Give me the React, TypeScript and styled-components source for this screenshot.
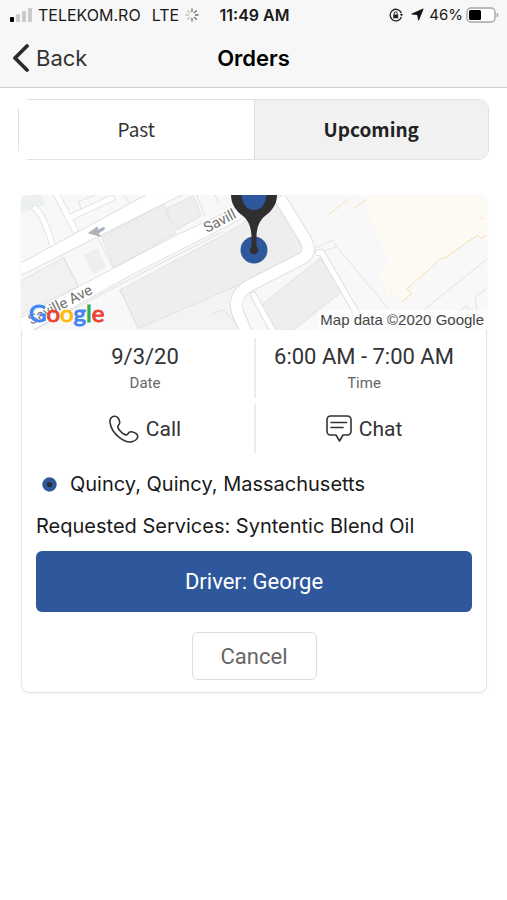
import React, { useState } from "react";
import styled, { createGlobalStyle } from "styled-components";

const system = `Inter, "Liberation Sans", sans-serif`;
const roboto = `Roboto, "Liberation Sans", sans-serif`;

const GlobalStyle = createGlobalStyle`
  *, *::before, *::after { box-sizing: border-box; }
  body { margin: 0; background: #fff; color: #1a1a1a; font-family: ${system}; }
  button { margin: 0; padding: 0; border: 0; background: none; color: inherit; font: inherit; cursor: pointer; }
  p, h1, dl, dd, dt { margin: 0; }
  svg { display: block; flex: none; }
`;

const Page = styled.div`
  display: flex;
  flex-direction: column;
  min-height: 100vh;
`;

const Header = styled.header`
  background: #f7f7f7;
  border-bottom: 1px solid #cfcfcf;
`;

const ThreeColumns = styled.div`
  display: grid;
  grid-template-columns: 1fr auto 1fr;
  align-items: center;
`;

const StatusBar = styled(ThreeColumns)`
  height: 29px;
  padding: 0 8px 0 10px;
  font-size: 16px;
  white-space: nowrap;
`;

const StatusGroup = styled.div<{ $end?: boolean }>`
  display: flex;
  align-items: center;
  justify-content: ${(p) => (p.$end ? "flex-end" : "flex-start")};
  gap: ${(p) => (p.$end ? 3 : 6)}px;
`;

const Clock = styled.time`
  font-size: 16px;
  font-weight: 600;
`;

const Network = styled.span`
  margin-left: 5px;
`;

const Percent = styled.span`
  font-size: 15px;
`;

const LocationSlot = styled.span`
  padding: 0 2px 0 5px;
`;

const NavBar = styled(ThreeColumns)`
  height: 58px;
  padding: 0 12px 1px;
`;

const BackButton = styled.button`
  display: flex;
  align-items: center;
  gap: 6px;
  justify-self: start;
  font-size: 22px;
  color: #333;
`;

const Title = styled.h1`
  font-size: 22px;
  font-weight: 600;
  color: #000;
`;

const Main = styled.main`
  padding: 11px 18px 24px;
`;

const Tabs = styled.div`
  position: relative;
  display: grid;
  grid-template-columns: 1fr 1fr;
  height: 61px;
  border: 1px solid #e2e2e2;
  border-radius: 0 10px 10px 0;

  &::before, &::after {
    content: "";
    position: absolute;
    left: -1px;
    width: 9px;
    height: 9px;
    background: #fff;
  }
  &::before { top: -1px; }
  &::after { bottom: -1px; }
`;

const Tab = styled.button<{ $active: boolean }>`
  padding-bottom: 2px;
  font-family: "Noto Sans CJK SC", "Noto Sans", sans-serif;
  font-size: 19px;
  line-height: 28px;
  font-weight: ${(p) => (p.$active ? 700 : 400)};
  color: ${(p) => (p.$active ? "#222" : "#333")};
  background: ${(p) => (p.$active ? "#f1f1f1" : "#fff")};
  & + & { border-left: 1px solid #dedede; border-radius: 0 9px 9px 0; }
`;

const Card = styled.article`
  margin: 35px 2px 0 3px;
  border-radius: 8px;
  box-shadow: 0 1px 3px rgba(0, 0, 0, 0.05);
`;

const MapFrame = styled.div`
  position: relative;
  height: 135px;
  border-radius: 6px 6px 0 0;
  overflow: hidden;
`;

const PinLayer = styled.div`
  position: absolute;
  inset: 0;
  display: flex;
  justify-content: center;
`;

const MapLogo = styled.span`
  position: absolute;
  left: 8px;
  bottom: 2px;
  font: 400 24px/30px Lato, sans-serif;
  -webkit-text-stroke: 1px currentColor;
  text-shadow: 0 0 2px #fff, 0 0 2px #fff;
`;

const LogoLetter = styled.span<{ $color: string }>`
  color: ${(p) => p.$color};
`;

const MapCredit = styled.span`
  position: absolute;
  right: 0;
  bottom: 0;
  padding: 0 3px 0 2px;
  background: rgba(255, 255, 255, 0.5);
  font: 15px/20px "Liberation Sans", sans-serif;
  color: #444;
`;

const CardBody = styled.div`
  padding: 8px 14px 12px;
  border: 1px solid #e4e4e4;
  border-top: 0;
  border-radius: 0 0 8px 8px;
`;

const SplitRow = styled.dl<{ $height: number }>`
  display: grid;
  grid-template-columns: 1fr 1fr;
  height: ${(p) => p.$height}px;
  margin-bottom: 6px;
  font-family: ${roboto};
  color: #333;
  > * + * { border-left: 2px solid #ececec; }
`;

const Fact = styled.div`
  display: flex;
  flex-direction: column-reverse;
  justify-content: flex-end;
  align-items: center;
  gap: 2px;
  padding-top: 5px;
`;

const FactValue = styled.dd`
  font-size: 22px;
  line-height: 28px;
  white-space: nowrap;
`;

const FactLabel = styled.dt`
  font-size: 15px;
  line-height: 20px;
  color: #666;
`;

const ContactButton = styled.button`
  display: flex;
  align-items: center;
  justify-content: center;
  gap: 7px;
  font-size: 21px;
`;

const Services = styled.div`
  padding: 4px 0;
`;

const Line = styled.p`
  display: flex;
  align-items: center;
  gap: 13px;
  min-height: 42px;
  font-size: 20px;
  line-height: 24px;
`;

const AddressLine = styled(Line)`
  padding-left: 6px;
`;

const DriverButton = styled.button`
  display: block;
  width: 100%;
  height: 61px;
  border-radius: 6px;
  background: #2e579c;
  color: #fff;
  font-family: ${roboto};
  font-size: 22px;
`;

const CancelButton = styled.button`
  display: block;
  width: 125px;
  height: 48px;
  margin: 20px auto 0;
  border: 1px solid #dedede;
  border-radius: 6px;
  color: #666;
  font-family: ${roboto};
  font-size: 22px;
`;

const SignalIcon = () => (
  <svg width="22" height="16" viewBox="0 0 22 16" aria-hidden="true">
    <rect x="0" y="10" width="4" height="5" rx="1" fill="#000" />
    <rect x="6" y="7" width="4" height="8" rx="1" fill="#cbcbcb" />
    <rect x="12" y="4" width="4" height="11" rx="1" fill="#cbcbcb" />
    <rect x="18" y="1" width="4" height="14" rx="1" fill="#cbcbcb" />
  </svg>
);

const SpinnerIcon = () => (
  <svg width="14" height="14" viewBox="-7 -7 14 14" stroke="#555" strokeWidth="1.3" strokeLinecap="round" aria-hidden="true">
    {[0, 45, 90, 135, 180, 225, 270, 315].map((angle) => (
      <path key={angle} d="M0 -3.4V-6.1" transform={`rotate(${angle})`} opacity={angle > 180 ? 0.35 : 0.85} />
    ))}
  </svg>
);

const RotationLockIcon = () => (
  <svg width="14" height="14" viewBox="0 0 14 14" fill="none" stroke="#222" strokeWidth="1.3" aria-hidden="true">
    <path d="M12.4 5.2A5.8 5.8 0 1 0 12.4 9" />
    <path d="M10.9 6h3.1l-1.5 2.4z" fill="#222" stroke="none" />
    <rect x="4.2" y="6.4" width="5" height="3.8" rx=".5" fill="#222" stroke="none" />
    <path d="M5.2 6.6V5.3a1.5 1.5 0 0 1 3 0v1.3" strokeWidth="1" />
  </svg>
);

const LocationIcon = () => (
  <svg width="13" height="13" viewBox="0 0 13 13" aria-hidden="true">
    <path d="M12.2.9 7.6 12.3 6.6 6.7.8 6z" fill="#111" stroke="#111" strokeWidth=".8" strokeLinejoin="round" />
  </svg>
);

const BatteryIcon = () => (
  <svg width="33" height="16" viewBox="0 0 33 16" aria-hidden="true">
    <rect x="1" y="1" width="28" height="14" rx="4" fill="#fff" stroke="#a5a5a5" strokeWidth="1.4" />
    <rect x="3" y="3" width="12" height="10" rx="1.5" fill="#000" />
    <path d="M30.7 5.4q1.7.6 1.7 2.6t-1.7 2.6z" fill="#a5a5a5" />
  </svg>
);

const ChevronIcon = () => (
  <svg width="18" height="28" viewBox="0 0 18 28" fill="none" stroke="#2b2b2b" strokeWidth="3.8" strokeLinecap="round" strokeLinejoin="round" aria-hidden="true">
    <path d="M15 2 3 14 15 26" />
  </svg>
);

const PhoneIcon = () => (
  <svg width="30" height="28" viewBox="0 0 30 28" fill="none" stroke="#333" strokeWidth="1.6" strokeLinecap="round" strokeLinejoin="round" aria-hidden="true">
    <path d="M5 1.3C2 1.8.8 4.6 1 7.4c.7 5.8 4.2 11 9.2 15 3.8 3 8.3 5.2 12.2 4.5 3-.6 6-2.8 6.3-5.1.2-1.8-1.1-3.1-2.8-3.9-2-.9-4.8-1.5-6-.4-.8.8-1 2-2 2.3-1.8.5-4.3-1.3-6-3.1-2-2.1-3.8-4.6-2.8-6 .7-1 1.9-1.8 1.6-3.7C10.3 4.4 8.7.7 5 1.3Z" />
  </svg>
);

const ChatIcon = () => (
  <svg width="26" height="28" viewBox="0 0 26 28" fill="none" stroke="#333" strokeWidth="1.6" strokeLinecap="round" strokeLinejoin="round" aria-hidden="true">
    <path d="M4.5 1h17A3.5 3.5 0 0 1 25 4.5v12a3.5 3.5 0 0 1-3.5 3.5h-4.5L13.5 26 10 20H4.5A3.5 3.5 0 0 1 1 16.5v-12A3.5 3.5 0 0 1 4.5 1ZM5 7.5h15.500M5 12.5h12" />
  </svg>
);

const AddressDot = () => (
  <svg width="15" height="15" viewBox="0 0 15 15" aria-hidden="true">
    <circle cx="7.5" cy="7.5" r="7.2" fill="#2e579c" />
    <circle cx="7.5" cy="7.5" r="2.6" fill="#2b2b33" />
  </svg>
);

const Pin = () => (
  <svg width="48" height="70" viewBox="0 0 48 70" aria-hidden="true">
    <circle cx="24" cy="55" r="13.5" fill="#2e579c" />
    <path d="M1 0C1 9 6 16 13 21c5 4 8 10 8.5 20v10.5a4.3 4.3 0 1 0 5 0V41C27 31 30 25 35 21 42 16 47 9 47 0Z" fill="#2f2f2f" />
    <path d="M11.5 0C12.5 9 17 15 24 15S35.5 9 36.5 0Z" fill="#2e579c" />
  </svg>
);

const StreetMap = () => (
  <svg width="100%" height="100%" viewBox="33 30 1398 405" preserveAspectRatio="xMidYMid slice" aria-hidden="true">
    <rect x="-600" y="0" width="2600" height="500" fill="#f8f8f8" />
    <path d="M1050 20H1440V180L1400 150 1310 215 1280 235 1190 310 1205 325 1175 352 1130 320 1100 250 1140 240 1090 120Z" fill="#fcfaf2" />
    <path d="M33 30H95L103 60 45 80 33 82Z" fill="#edf0f0" />
    <g fill="#eeeeee" stroke="#e2e2e2" strokeWidth="3">
      <path d="M275 155 460 58 497 145 312 248Z" />
      <path d="M468 72 550 32 574 92 500 134Z" />
      <path d="M222 210 262 190 288 245 250 268Z" stroke="none" />
      <path d="M20 295 160 218 205 303 20 395Z" fill="#f1f1f1" />
      <path d="M385 425 680 290 700 400 715 440H380Z" stroke="none" fill="#f3f3f3" />
      <path d="M330 315 640 150 805 50 885 205 720 285 385 430Z" />
      <path d="M755 360 930 220 1003 315 850 435H790Z" />
    </g>
    <g fill="none" stroke="#e0e2e4" strokeWidth="3">
      <path d="M160 215 205 303M262 155 310 250M205 50 255 30M205 50 215 75M345 30 357 55M560 30 585 92M615 30 625 55M330 315 385 430" />
      <path d="M915 190 968 165 980 185 925 205M980 185 1135 372" />
      <path d="M1245 372 1431 222M1340 385 1370 362 1380 375M1400 375 1396 335 1431 310M610 385 640 375 695 430" />
    </g>
    <g fill="none" strokeLinecap="round" strokeLinejoin="round">
      <path d="M75 70Q105 95 130 190M135 20 195 135M185 95 305 40" stroke="#e2e4e6" strokeWidth="21" />
      <path d="M75 70Q105 95 130 190M135 20 195 135M185 95 305 40" stroke="#fff" strokeWidth="15" />
      <path d="M925 203H935L1040 385M730 330 790 440" stroke="#dfdfdf" strokeWidth="21" />
      <path d="M925 203H935L1040 385M730 330 790 440" stroke="#fff" strokeWidth="15" />
      <path d="M795 15 887 165Q906 202 878 220L725 298Q665 328 684 385L710 445" stroke="#dedede" strokeWidth="39" />
      <path d="M795 15 887 165Q906 202 878 220L725 298Q665 328 684 385L710 445" stroke="#fff" strokeWidth="33" />
    </g>
    <path d="M-300 411 33 234 440 12 550 12 33 271-300 444Z" fill="#fff" stroke="#dcdfe1" strokeWidth="3" />
    <path d="M-300 575 33 398 310 250 490 155 760 30 820 30 640 130 370 267 33 455-300 640Z" fill="#fff" stroke="#dcdfe1" strokeWidth="3" />
    <path d="M70 437 370 277 640 140" fill="none" stroke="#dcdfe1" strokeWidth="3" />
    <path d="M236 144 262 126 263 136 282 127 283 133 264 145 272 154Z" fill="#aab2bc" stroke="#aab2bc" strokeWidth="3" />
    <g fill="none" stroke="#f3dfae" strokeWidth="3">
      <path d="M958 87 1015 43M1033 70 1067 45M1192 310 1275 238 1285 225 1310 215 1403 150 1415 160 1431 150M1190 310 1205 325 1175 352M1143 317 1147 322M1412 97 1420 101" />
    </g>
    <g fill="#707070" stroke="#fff" strokeWidth="5" paintOrder="stroke" fontFamily="Roboto, sans-serif" fontSize="44">
      <text transform="translate(590 144) rotate(-27)">Savill</text>
      <text transform="translate(64 420) rotate(-27)">Saville Ave</text>
    </g>
  </svg>
);

const logo: [string, string][] = [
  ["G", "#4285f4"],
  ["o", "#ea4335"],
  ["o", "#fbbc05"],
  ["g", "#4285f4"],
  ["l", "#34a853"],
  ["e", "#ea4335"],
];

const tabs = ["Past", "Upcoming"];

export default function App() {
  const [active, setActive] = useState("Upcoming");
  return (
    <Page>
      <GlobalStyle />
      <Header>
        <StatusBar>
          <StatusGroup>
            <SignalIcon />
            <span>TELEKOM.RO</span>
            <Network>LTE</Network>
            <SpinnerIcon />
          </StatusGroup>
          <Clock>11:49 AM</Clock>
          <StatusGroup $end>
            <RotationLockIcon />
            <LocationSlot>
              <LocationIcon />
            </LocationSlot>
            <Percent>46%</Percent>
            <BatteryIcon />
          </StatusGroup>
        </StatusBar>
        <NavBar>
          <BackButton type="button">
            <ChevronIcon />
            Back
          </BackButton>
          <Title>Orders</Title>
        </NavBar>
      </Header>
      <Main>
        <Tabs role="tablist">
          {tabs.map((name) => (
            <Tab key={name} type="button" role="tab" aria-selected={active === name} $active={active === name} onClick={() => setActive(name)}>
              {name}
            </Tab>
          ))}
        </Tabs>
        <Card>
          <MapFrame>
            <StreetMap />
            <PinLayer>
              <Pin />
            </PinLayer>
            <MapLogo>
              {logo.map(([letter, color], i) => (
                <LogoLetter key={i} $color={color}>{letter}</LogoLetter>
              ))}
            </MapLogo>
            <MapCredit>Map data ©2020 Google</MapCredit>
          </MapFrame>
          <CardBody>
            <SplitRow $height={60}>
              <Fact>
                <FactLabel>Date</FactLabel>
                <FactValue>9/3/20</FactValue>
              </Fact>
              <Fact>
                <FactLabel>Time</FactLabel>
                <FactValue>6:00 AM - 7:00 AM</FactValue>
              </Fact>
            </SplitRow>
            <SplitRow as="div" $height={49}>
              <ContactButton type="button">
                <PhoneIcon />
                Call
              </ContactButton>
              <ContactButton type="button">
                <ChatIcon />
                Chat
              </ContactButton>
            </SplitRow>
            <Services>
              <AddressLine>
                <AddressDot />
                Quincy, Quincy, Massachusetts
              </AddressLine>
              <Line>Requested Services: Syntentic Blend Oil</Line>
            </Services>
            <DriverButton type="button">Driver: George</DriverButton>
            <CancelButton type="button">Cancel</CancelButton>
          </CardBody>
        </Card>
      </Main>
    </Page>
  );
}
